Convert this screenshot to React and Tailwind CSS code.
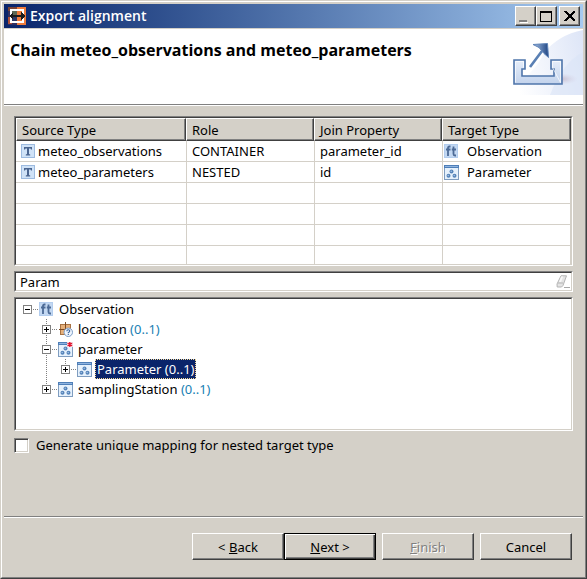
import React from "react";

const sunken =
  "border border-t-[#808080] border-l-[#808080] border-r-white border-b-white";
const sunkenInner =
  "border border-t-[#404040] border-l-[#404040] border-r-[#d4d0c8] border-b-[#d4d0c8]";
const raised =
  "border border-t-white border-l-white border-r-[#404040] border-b-[#404040] shadow-[inset_-1px_-1px_0_#808080]";

function AppIcon() {
  return (
    <svg width="18" height="18" viewBox="0 0 18 18" shapeRendering="crispEdges" aria-hidden="true">
      <rect width="9" height="18" fill="#33305f" />
      <rect width="9" height="4" fill="#7a4436" />
      <rect x="9" width="9" height="18" fill="#f07c3c" />
      <rect y="10" width="4" height="7" fill="#b05038" />
      <rect x="3" y="3" width="12" height="12" fill="none" stroke="#fff" strokeWidth="2" />
      <rect x="4" y="4" width="5" height="5" fill="#5d6a55" />
      <rect x="4" y="9" width="5" height="5" fill="#2d3a68" />
      <rect x="3" y="8" width="12" height="2" fill="#1d1d1d" />
      <path d="M1 9 5 5v8zM17 9 13 5v8z" fill="#1d1d1d" />
    </svg>
  );
}

function TypeIcon() {
  return (
    <svg width="14" height="14" viewBox="0 0 14 14" aria-hidden="true">
      <rect x="0.5" y="0.5" width="13" height="13" fill="#cfe2f7" stroke="#9dbbe0" />
      <path d="M3 3h8v2.500h-1l-.5-1H8v5.500l1.200.5v1H4.800v-1L6 10V4.500H4.500l-.5 1H3z" fill="#4a6590" />
    </svg>
  );
}

function FeatureIcon() {
  return (
    <svg width="14" height="14" viewBox="0 0 14 14" aria-hidden="true">
      <rect width="14" height="14" fill="#b3cdee" />
      <rect x="1" y="1" width="12" height="12" fill="#c3d8f2" />
      <path
        d="M6.500 2.500H5.500Q4 2.500 4 4v8M2 5.500h4.500M9.500 2.500v7.500q0 1.500 1.500 1.500h1M7.800 5.500H12"
        fill="none"
        stroke="#4c6a96"
        strokeWidth="1.800"
      />
    </svg>
  );
}

function ComplexIcon({ required }) {
  return (
    <svg width="15" height="15" viewBox="0 0 15 15" aria-hidden="true">
      <rect x="0.5" y="0.5" width="14" height="14" fill="#e6f1fc" stroke="#7f9dc0" />
      <rect width="15" height="3" fill="#4f7fb8" />
      <rect x="1" y="1" width="13" height="1" fill="#8fb4e0" />
      <circle cx="7.500" cy="6.500" r="2" fill="#5583b8" />
      <circle cx="4.500" cy="10.800" r="2" fill="#5583b8" />
      <circle cx="10.500" cy="10.800" r="2" fill="#5583b8" />
      <circle cx="7.200" cy="6.200" r=".7" fill="#a9c8ec" />
      <circle cx="4.200" cy="10.500" r=".7" fill="#a9c8ec" />
      <circle cx="10.200" cy="10.500" r=".7" fill="#a9c8ec" />
      {required && (
        <g>
          <rect x="9" width="6" height="5" fill="#f3d6dd" />
          <path d="M11.800 0v5M9.600 1.200l4.400 2.600M14 1.200 9.600 3.800" stroke="#e0102c" strokeWidth="1.300" />
        </g>
      )}
    </svg>
  );
}

function LocationIcon() {
  return (
    <svg width="15" height="15" viewBox="0 0 15 15" aria-hidden="true">
      <rect x="2" y="2" width="11" height="11" fill="#a87242" />
      <path d="M3 3h4v4H3zM8 3h4v4H8zM3 8h4v4H3z" fill="#e6b07a" />
      <path d="M7.500 0v13M1 7.500h13" stroke="#7c4a22" />
      <circle cx="10.300" cy="10.300" r="4.200" fill="#eef5fd" stroke="#7b9cc6" />
      <path d="M8.800 9.200q0-1.400 1.500-1.400t1.500 1.300q0 .8-1.500 1.600v.6M10.300 12v1" fill="none" stroke="#39639c" strokeWidth="1.100" />
    </svg>
  );
}

function ExportBanner() {
  return (
    <svg width="75" height="66" viewBox="0 0 75 66" className="shrink-0" aria-hidden="true">
      <defs>
        <linearGradient id="sky" x1="0" x2="1" y1="0.200" y2="0">
          <stop offset="0" stopColor="#ffffff" />
          <stop offset="1" stopColor="#dde5f7" />
        </linearGradient>
        <linearGradient id="tray" x1="0" x2="0" y1="0" y2="1">
          <stop offset="0" stopColor="#e6eefa" />
          <stop offset="1" stopColor="#c3d3ec" />
        </linearGradient>
        <linearGradient id="head" x1="0" x2="1">
          <stop offset="0" stopColor="#a8c3e6" />
          <stop offset="1" stopColor="#1f4584" />
        </linearGradient>
        <radialGradient id="shade">
          <stop offset="0" stopColor="#b9a3b5" stopOpacity=".7" />
          <stop offset="1" stopColor="#d5cfe2" stopOpacity="0" />
        </radialGradient>
      </defs>
      <path d="M0 66V60Q26 46 36 24 50 6 75 1V66z" fill="url(#sky)" />
      <path d="M42 66Q54 34 75 23V66z" fill="#dbe4f7" opacity=".6" />
      <ellipse cx="52" cy="50" rx="18" ry="6" fill="url(#shade)" />
      <path
        d="M6 31H17V40H14V47H46V40H43V31H54V55H6z"
        fill="url(#tray)"
        stroke="#4f75aa"
        strokeWidth="1.600"
      />
      <path d="M7.500 53.500V32.500H15.500V38.500M44.500 38.500V32.500H52.500V53.500z" fill="none" stroke="#fff" strokeOpacity=".7" />
      <path d="M22 38 34 22" stroke="#5a80b4" strokeWidth="2.600" />
      <path d="M25 15.500 39.500 14.500 40.500 28.500 36 24.500 31 18.500z" fill="url(#head)" stroke="#5f84b8" />
    </svg>
  );
}

function EraserIcon() {
  return (
    <svg width="14" height="13" viewBox="0 0 14 13" className="shrink-0" aria-hidden="true">
      <path d="M5 .8h5.500L7 10.500 5.500 12H1.200L1 9z" fill="#e4e4e4" stroke="#b4b4b4" />
      <path d="M2 8h5" stroke="#b4b4b4" />
      <path d="M3 7 5.200 1.500h2L5 7z" fill="#f8f8f8" />
      <path d="M8 12.500h6" stroke="#a8a8a8" />
    </svg>
  );
}

/* One 19x20 tree cell: dotted guide lines plus an optional expander box. */
function Guide({ up, down, right, box }) {
  const dots = { stroke: "#808080", strokeDasharray: "1 1" };
  return (
    <svg width="21" height="20" viewBox="0 0 21 20" shapeRendering="crispEdges" className="-mr-0.5 block">
      {up && <path d="M9.500 0V10" {...dots} />}
      {down && <path d="M9.500 10V20" {...dots} />}
      {right && <path d="M9 10.500H21" {...dots} />}
      {box && (
        <g>
          <rect x="5.500" y="6.500" width="8" height="8" fill="#fff" stroke="#808080" />
          <path d={box === "plus" ? "M7 10.500H12M9.500 8V13" : "M7 10.500H12"} stroke="#000" />
        </g>
      )}
    </svg>
  );
}

function TreeRow({ indents = [], guide, icon, label, count, selected, level }) {
  return (
    <li
      role="treeitem"
      aria-level={level}
      aria-expanded={guide.box === "minus"}
      aria-selected={!!selected}
      className="flex h-5 items-center"
    >
      {indents.map((line, i) => (
        <Guide key={i} up={line} down={line} />
      ))}
      <button type="button" aria-label={"Toggle " + label}>
        <Guide {...guide} right />
      </button>
      <span className="flex w-5 pl-0.5">{icon}</span>
      {selected ? (
        <span className="h-5 bg-[#0a246a] px-0.5 leading-5 whitespace-nowrap text-white outline-1 -outline-offset-1 outline-dotted outline-[#f5db95]">
          {label} {count}
        </span>
      ) : (
        <span className="px-0.5 whitespace-nowrap">
          {label} {count && <span className="text-[#1a80b3]">{count}</span>}
        </span>
      )}
    </li>
  );
}

const columns = ["Source Type", "Role", "Join Property", "Target Type"];
const rows = [
  { source: "meteo_observations", role: "CONTAINER", join: "parameter_id", target: "Observation", icon: <FeatureIcon /> },
  { source: "meteo_parameters", role: "NESTED", join: "id", target: "Parameter", icon: <ComplexIcon /> },
];

function JoinTable() {
  const cell = "border-b border-l border-[#d4d0c8] p-0 pl-[5px]";
  return (
    <div className={sunken}>
      <div className={sunkenInner + " h-[148px] overflow-hidden bg-white"}>
        <table className="w-full table-fixed border-separate border-spacing-0">
          <colgroup>
            <col className="w-[170px]" />
            <col className="w-32" />
            <col className="w-32" />
            <col />
          </colgroup>
          <thead>
            <tr className="h-[23px]">
              {columns.map((c) => (
                <th key={c} scope="col" className={raised + " bg-[#d4d0c8] p-0 pl-[5px] text-left font-normal"}>
                  {c}
                </th>
              ))}
            </tr>
          </thead>
          <tbody>
            {rows.map((r) => (
              <tr key={r.source} className="h-[21px]">
                <td className="border-b border-[#d4d0c8] p-0 pl-[5px]">
                  <span className="flex items-center gap-[3px]">
                    <TypeIcon />
                    {r.source}
                  </span>
                </td>
                <td className={cell}>{r.role}</td>
                <td className={cell}>{r.join}</td>
                <td className="border-r border-b border-l border-[#d4d0c8] p-0 pl-px">
                  <span className="flex items-center gap-2">
                    <span className="flex w-[15px]">{r.icon}</span>
                    {r.target}
                  </span>
                </td>
              </tr>
            ))}
            {[0, 1, 2, 3].map((i) => (
              <tr key={i} className="h-[21px]">
                <td className="border-b border-[#d4d0c8] p-0" />
                <td className={cell} />
                <td className={cell} />
                <td className="border-r border-b border-l border-[#d4d0c8] p-0" />
              </tr>
            ))}
          </tbody>
        </table>
      </div>
    </div>
  );
}

function CaptionButton({ label, children }) {
  return (
    <button type="button" aria-label={label} className={raised + " h-5 w-[21px] bg-[#d4d0c8]"}>
      <svg width="19" height="18" viewBox="0 0 19 18" shapeRendering="crispEdges">
        {children}
      </svg>
    </button>
  );
}

export default function App() {
  const button = "h-[27px] w-[92px] bg-[#d4d0c8] ";
  return (
    <div className="flex min-h-screen flex-col border border-t-[#d4d0c8] border-l-[#d4d0c8] border-r-[#404040] border-b-[#404040] bg-[#d4d0c8] font-[Noto_Sans,sans-serif] text-[13px] leading-5 text-black">
      <div className="flex flex-1 flex-col border border-t-white border-l-white border-r-[#808080] border-b-[#808080] p-0.5">
        <div className="flex h-6 items-center bg-linear-to-r from-[#0a246a] to-[#a6caf0] pr-[3px] pl-1">
          <AppIcon />
          <span className="flex-1 pl-1 font-[Open_Sans,sans-serif] text-sm font-semibold text-white">
            Export alignment
          </span>
          <CaptionButton label="Minimize">
            <path d="M4 15.500h8" stroke="#fff" />
            <path d="M3 14h8" stroke="#808080" strokeWidth="2" />
          </CaptionButton>
          <CaptionButton label="Maximize">
            <path d="M3.500 4.500h11v10h-11zM3 5.500h12" fill="none" stroke="#000" />
          </CaptionButton>
          <span className="w-0.5" />
          <CaptionButton label="Close">
            <path d="M4 4h2l3.500 3.500L13 4h2v1l-4 4 4 4v1h-2L9.500 10.500 6 14H4v-1l4-4-4-4z" fill="#000" />
          </CaptionButton>
        </div>

        <header className="mt-px flex h-[76px] justify-between border-b border-[#808080] bg-white">
          <h1 className="pt-[11px] pl-1.5 font-[Open_Sans,sans-serif] text-base leading-5 font-bold">
            Chain meteo_observations and meteo_parameters
          </h1>
          <ExportBanner />
        </header>

        <main className="flex flex-1 flex-col border-t border-white px-2.5 pt-2.5">
          <JoinTable />
          <div className={sunken + " mt-[5px]"}>
            <div className={sunkenInner + " flex h-[19px] items-center bg-white pr-px pl-1"}>
              <input
                type="text"
                aria-label="Filter types"
                defaultValue="Param"
                className="min-w-0 flex-1 bg-transparent leading-4 outline-none"
              />
              <button type="button" aria-label="Clear filter">
                <EraserIcon />
              </button>
            </div>
          </div>
          <div className={sunken + " mt-[5px]"}>
            <ul role="tree" aria-label="Target types" className={sunkenInner + " h-[132px] bg-white pl-0.5"}>
              <TreeRow level={1} guide={{ box: "minus" }} icon={<FeatureIcon />} label="Observation" />
              <TreeRow level={2} indents={[false]} guide={{ box: "plus", up: true, down: true }} icon={<LocationIcon />} label="location" count="(0..1)" />
              <TreeRow level={2} indents={[false]} guide={{ box: "minus", up: true, down: true }} icon={<ComplexIcon required />} label="parameter" />
              <TreeRow level={3} indents={[false, true]} guide={{ box: "plus", up: true }} icon={<ComplexIcon />} label="Parameter" count="(0..1)" selected />
              <TreeRow level={2} indents={[false]} guide={{ box: "plus", up: true }} icon={<ComplexIcon />} label="samplingStation" count="(0..1)" />
            </ul>
          </div>
          <label className="mt-1 flex items-center gap-[7px]">
            <input
              type="checkbox"
              className="size-[15px] appearance-none border border-t-[#808080] border-r-white border-b-white border-l-[#808080] bg-white shadow-[inset_1px_1px_0_#404040,inset_-1px_-1px_0_#d4d0c8]"
            />
            Generate unique mapping for nested target type
          </label>
        </main>

        <footer className="flex h-[59px] justify-end border-t border-[#808080] pt-4 pr-[11px] shadow-[inset_0_1px_0_#fff]">
          <button type="button" className={button + raised}>
            &lt; <u>B</u>ack
          </button>
          <button
            type="button"
            className={button + "border border-black shadow-[inset_1px_1px_0_#fff,inset_-1px_-1px_0_#404040,inset_-2px_-2px_0_#808080]"}
          >
            <u>N</u>ext &gt;
          </button>
          <button
            type="button"
            disabled
            className={button + raised + " ml-1.5 text-[#808080] [text-shadow:1px_1px_0_#fff]"}
          >
            <u>F</u>inish
          </button>
          <button type="button" className={button + raised + " ml-1.5"}>
            Cancel
          </button>
        </footer>
      </div>
    </div>
  );
}
